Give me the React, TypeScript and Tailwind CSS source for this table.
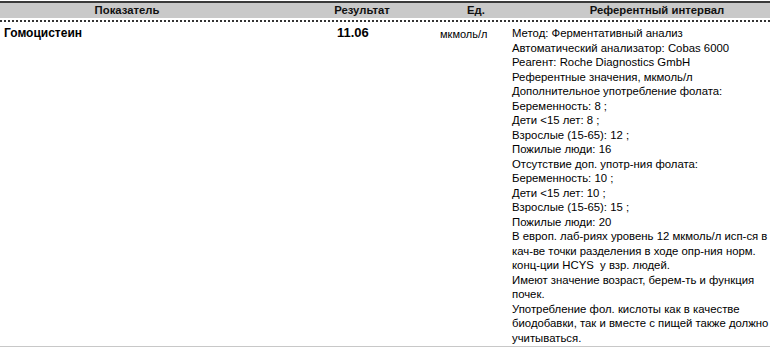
import React from "react";

const refLines = [
  "Метод: Ферментативный анализ",
  "Автоматический анализатор: Cobas 6000",
  "Реагент: Roche Diagnostics GmbH",
  "Референтные значения, мкмоль/л",
  "Дополнительное употребление фолата:",
  "Беременность: 8 ;",
  "Дети <15 лет: 8 ;",
  "Взрослые (15-65): 12 ;",
  "Пожилые люди: 16",
  "Отсутствие доп. употр-ния фолата:",
  "Беременность: 10 ;",
  "Дети <15 лет: 10 ;",
  "Взрослые (15-65): 15 ;",
  "Пожилые люди: 20",
  "В европ. лаб-риях уровень 12 мкмоль/л исп-ся в",
  "кач-ве точки разделения в ходе опр-ния норм.",
  "конц-ции HCYS\u00a0 у взр. людей.",
  "Имеют значение возраст, берем-ть и функция",
  "почек.",
  "Употребление фол. кислоты как в качестве",
  "биодобавки, так и вместе с пищей также должно",
  "учитываться.",
];

export default function App() {
  return (
    <div
      className="w-[770px] h-[347px] bg-white text-black overflow-hidden flex flex-col"
      style={{ fontFamily: '"Liberation Sans", Arial, sans-serif' }}
    >
      <div className="h-px bg-white" />
      <div className="h-[2px] bg-[#3a3a3a]" />
      <div className="h-[15px] bg-[#c9c9c9] flex items-center text-[11.3px] font-bold leading-none text-[#111]">
        <div className="w-[322px] text-center pr-[68px]">Показатель</div>
        <div className="w-[101px] text-center pr-[21px]">Результат</div>
        <div className="w-[110px] text-center pr-[4px]">Ед.</div>
        <div className="flex-1 text-center pl-[11px]">Референтный интервал</div>
      </div>
      <div className="h-[2px]" />
      <div className="h-0 border-b-2 border-dotted border-[#333]" />
      <div className="flex pt-[4px] flex-1">
        <div className="w-[336px] pl-[4px] text-[12px] font-bold leading-[14.5px]">Гомоцистеин</div>
        <div className="w-[104px] pl-[1px] text-[13px] font-bold leading-[14.5px]">11.06</div>
        <div className="w-[72px] pt-[1px] text-[11px] leading-[14.5px]">мкмоль/л</div>
        <div className="flex-1 text-[11.35px] leading-[14.5px] whitespace-nowrap">
          {refLines.map((l, i) => (
            <div key={i}>{l}</div>
          ))}
        </div>
      </div>
      <div className="h-px bg-[#c8c8c8]" />
    </div>
  );
}
